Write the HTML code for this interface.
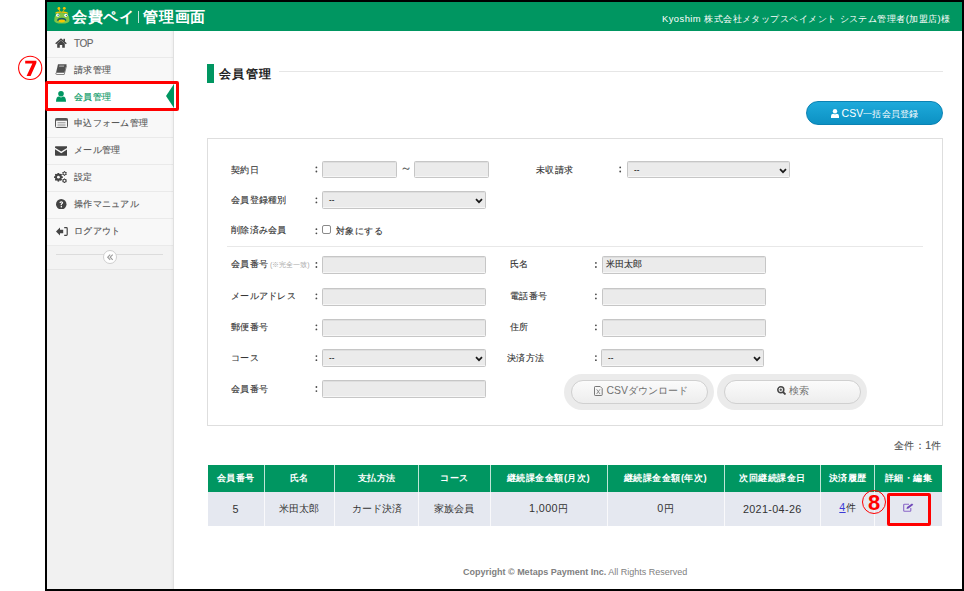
<!DOCTYPE html>
<html lang="ja">
<head>
<meta charset="utf-8">
<style>
*{box-sizing:border-box;margin:0;padding:0}
html,body{width:964px;height:591px;overflow:hidden;background:#fff;font-family:"Liberation Sans",sans-serif;color:#333}
.a{position:absolute}
#frame{left:45px;top:0;width:919px;height:591px;border:2px solid #000}
#hdr{left:47px;top:2px;width:915px;height:29px;background:#009661}
#logo{left:72px;top:4.7px;color:#fff;font-weight:bold;font-size:15.3px;letter-spacing:.7px;line-height:24px;white-space:nowrap}
#user{left:662px;top:12px;color:#fff;letter-spacing:.45px;font-size:9.4px;line-height:14px;white-space:nowrap}
#side{left:47px;top:31px;width:127px;height:558px;background:#f1f1f1;border-right:1px solid #e0e0e0}
.mi{left:47px;width:126px;background:#f8f8f8;border-bottom:1px solid #eaeaea}
.mt{left:74px;font-size:9.4px;letter-spacing:.3px;color:#555;-webkit-text-stroke-width:.12px;line-height:12px;white-space:nowrap}
.lbl{font-size:9.4px;letter-spacing:.25px;color:#333;-webkit-text-stroke-width:.12px;line-height:12px;white-space:nowrap}
.dt{width:1.8px;height:1.8px;border-radius:50%;background:#444}
.inp{background:#ebebeb;border:1px solid #c6c6c6;border-radius:1.5px;box-shadow:inset 0 1px 0 #dedede,inset 0 -1px 0 #f6f6f6}
.sel svg{position:absolute;right:2.5px;top:5.5px}
.sel span{position:absolute;left:6px;top:3px;font-size:8px;color:#333;font-weight:bold}
th,td{text-align:center;border-left:1px solid rgba(255,255,255,.75);padding:0;white-space:nowrap}
th:first-child,td:first-child{border-left:0}
th{font-size:9.4px;letter-spacing:.5px;color:#fff;font-weight:bold}
td{font-size:10px;color:#333}
.d{font-size:10.8px;letter-spacing:.35px}
</style>
</head>
<body>
<div class="a" id="frame"></div>
<div class="a" id="hdr"></div>
<!-- logo frog -->
<svg class="a" style="left:53px;top:6px" width="18" height="19" viewBox="53 6 18 19">
<circle cx="58.9" cy="8.5" r="1.4" fill="#f5c400"/><circle cx="64.3" cy="8.3" r="1.4" fill="#f5c400"/>
<path d="M59.1 9.5 Q59.6 11 60.2 11.8 M64.1 9.5 Q63.6 11 62.6 11.8" stroke="#f5c400" stroke-width="0.9" fill="none"/>
<path d="M55.2 13 Q56 11.6 60.5 11.6 Q62 11.8 63 11.4 Q66.5 11.2 68.4 12.9 L67.8 13.8 Q63 12.6 61.5 12.8 Q58 12.6 55.8 13.8Z" fill="#f5c400"/>
<path d="M56.2 13.6 Q61.8 12.4 67.4 13.6 Q69.6 17 69.5 20.5 Q69.4 23.6 61.8 23.6 Q54.2 23.6 54.2 20.5 Q54.1 17 56.2 13.6Z" fill="#80c545"/>
<circle cx="57.7" cy="15.2" r="1.6" fill="#fff"/><circle cx="65.9" cy="15.3" r="1.6" fill="#fff"/>
<circle cx="58.2" cy="15.3" r=".75" fill="#2d6aa0"/><circle cx="66.4" cy="15.4" r=".75" fill="#2d6aa0"/>
<path d="M57 20.8 Q57 17.7 61.7 17.7 Q66.4 17.7 66.4 20.8Z" fill="#0f5b64"/>
<ellipse cx="61.8" cy="21" rx="3.2" ry="1.4" fill="#f7c600"/>
</svg>
<div class="a" id="logo">会費ペイ<span style="display:inline-block;width:1px;height:12px;background:rgba(255,255,255,.75);margin:0 3.8px 0 3.5px;vertical-align:-1px"></span>管理画面</div>
<div class="a" id="user">Kyoshim 株式会社メタップスペイメント システム管理者(加盟店)様</div>

<!-- sidebar -->
<div class="a" id="side"></div>
<div class="a mi" style="top:31px;height:27px"></div>
<div class="a mi" style="top:58px;height:26px"></div>
<div class="a mi" style="top:84px;height:27px;background:#fff"></div>
<div class="a mi" style="top:111px;height:27px"></div>
<div class="a mi" style="top:138px;height:27px"></div>
<div class="a mi" style="top:165px;height:27px"></div>
<div class="a mi" style="top:192px;height:27px"></div>
<div class="a mi" style="top:219px;height:27px"></div>
<div class="a" style="left:47px;top:246px;width:126px;height:24px;background:#f3f3f3;border-bottom:1px solid #e6e6e6"></div>
<div class="a" style="left:56px;top:254px;width:107px;height:1px;background:#dcdcdc"></div>
<div class="a" style="left:103px;top:250px;width:14px;height:14px;border-radius:50%;background:#fff;border:1px solid #cfcfcf"></div>
<svg class="a" style="left:105.5px;top:253px" width="8" height="8" viewBox="0 0 8 8"><path d="M4.2 1.6L1.7 4.2L4.2 6.8M6.7 1.6L4.2 4.2L6.7 6.8" stroke="#9a9a9a" stroke-width="1.1" fill="none"/></svg>

<svg class="a" style="left:55px;top:38px" width="12" height="10" viewBox="0 0 12 10"><path d="M6 0.3 L11.8 5.2 L10.8 6.2 L6 2.2 L1.2 6.2 L0.2 5.2Z" fill="#444"/><path d="M2.2 5.6 L6 2.6 L9.8 5.6 V9.8 H7.2 V7 H4.8 V9.8 H2.2Z" fill="#444"/><rect x="8.4" y="0.8" width="1.6" height="2.8" fill="#444"/></svg>
<div class="a mt" style="top:37.5px;font-size:10px;letter-spacing:-.5px;color:#666">TOP</div>
<svg class="a" style="left:55px;top:64px" width="12" height="11" viewBox="0 0 12 11"><path d="M3 0.3 H11.6 L9.6 8.8 H1Z" fill="#505050"/><path d="M4.3 1.6H9.3L9 2.8H4Z" fill="#aaa"/><path d="M1 8.8 Q0.3 10.5 1.8 10.5 H9.2 L11.6 1.5" stroke="#777" stroke-width=".9" fill="none"/></svg>
<div class="a mt" style="top:64px">請求管理</div>
<svg class="a" style="left:56px;top:91px" width="10" height="11" viewBox="0 0 10 11"><circle cx="5" cy="2.8" r="2.8" fill="#009661"/><path d="M0 10.8 Q0 5.6 3 5.6 Q5 7.2 7 5.6 Q10 5.6 10 10.8Z" fill="#009661"/></svg>
<div class="a mt" style="top:91px;color:#009661">会員管理</div>
<svg class="a" style="left:54.5px;top:118px" width="13" height="10" viewBox="0 0 13 10"><rect x="0.5" y="0.5" width="12" height="9" rx="1" fill="#f4f4f4" stroke="#555"/><rect x="0.5" y="0.5" width="12" height="2.2" fill="#555"/><path d="M2.5 4.5H10.5M2.5 6.2H10.5M2.5 7.8H10.5" stroke="#999" stroke-width=".8"/></svg>
<div class="a mt" style="top:117px">申込フォーム管理</div>
<svg class="a" style="left:54.5px;top:146px" width="12.5" height="10" viewBox="0 0 13 10"><path d="M0 0.8Q0 0 .8 0H12.2Q13 0 13 .8V1.5L6.5 5.6L0 1.5Z" fill="#444"/><path d="M0 3.2L6.5 7.3L13 3.2V9.2Q13 10 12.2 10H.8Q0 10 0 9.2Z" fill="#444"/></svg>
<div class="a mt" style="top:144px">メール管理</div>
<svg class="a" style="left:53px;top:170px" width="14" height="14" viewBox="53 170 14 14"><g fill="#444"><rect x="57.6" y="173.0" width="1.5" height="8.4" transform="rotate(0 58.4 177.2)"/><rect x="57.6" y="173.0" width="1.5" height="8.4" transform="rotate(45 58.4 177.2)"/><rect x="57.6" y="173.0" width="1.5" height="8.4" transform="rotate(90 58.4 177.2)"/><rect x="57.6" y="173.0" width="1.5" height="8.4" transform="rotate(135 58.4 177.2)"/><rect x="57.6" y="173.0" width="1.5" height="8.4" transform="rotate(180 58.4 177.2)"/><rect x="57.6" y="173.0" width="1.5" height="8.4" transform="rotate(225 58.4 177.2)"/><rect x="57.6" y="173.0" width="1.5" height="8.4" transform="rotate(270 58.4 177.2)"/><rect x="57.6" y="173.0" width="1.5" height="8.4" transform="rotate(315 58.4 177.2)"/><rect x="64.05" y="171.40" width="0.9" height="4.2" transform="rotate(0 64.5 173.5)"/><rect x="64.05" y="171.40" width="0.9" height="4.2" transform="rotate(60 64.5 173.5)"/><rect x="64.05" y="171.40" width="0.9" height="4.2" transform="rotate(120 64.5 173.5)"/><rect x="64.05" y="171.40" width="0.9" height="4.2" transform="rotate(180 64.5 173.5)"/><rect x="64.05" y="171.40" width="0.9" height="4.2" transform="rotate(240 64.5 173.5)"/><rect x="64.05" y="171.40" width="0.9" height="4.2" transform="rotate(300 64.5 173.5)"/><rect x="64.05" y="178.70" width="0.9" height="4.2" transform="rotate(0 64.5 180.8)"/><rect x="64.05" y="178.70" width="0.9" height="4.2" transform="rotate(60 64.5 180.8)"/><rect x="64.05" y="178.70" width="0.9" height="4.2" transform="rotate(120 64.5 180.8)"/><rect x="64.05" y="178.70" width="0.9" height="4.2" transform="rotate(180 64.5 180.8)"/><rect x="64.05" y="178.70" width="0.9" height="4.2" transform="rotate(240 64.5 180.8)"/><rect x="64.05" y="178.70" width="0.9" height="4.2" transform="rotate(300 64.5 180.8)"/></g><circle cx="58.4" cy="177.2" r="2.5" fill="none" stroke="#444" stroke-width="1.7"/><circle cx="64.5" cy="173.5" r="1.45" fill="none" stroke="#444" stroke-width="1.1"/><circle cx="64.5" cy="180.8" r="1.45" fill="none" stroke="#444" stroke-width="1.1"/><circle cx="58.4" cy="177.2" r="1.4" fill="#f8f8f8"/><circle cx="64.5" cy="173.5" r=".95" fill="#f8f8f8"/><circle cx="64.5" cy="180.8" r=".95" fill="#f8f8f8"/></svg>
<div class="a mt" style="top:171px">設定</div>
<svg class="a" style="left:56px;top:198.5px" width="10.5" height="10.5" viewBox="0 0 11 11"><circle cx="5.5" cy="5.5" r="5.5" fill="#444"/><path d="M3.6 4.3 Q3.6 2.4 5.5 2.4 Q7.5 2.4 7.5 4 Q7.5 5 6.2 5.6 L6.2 6.6 L4.9 6.6 L4.9 5.2 Q6.1 4.6 6.1 4 Q6.1 3.5 5.5 3.5 Q4.9 3.5 4.9 4.3Z" fill="#fff"/><rect x="4.9" y="7.4" width="1.4" height="1.4" fill="#fff"/></svg>
<div class="a mt" style="top:198px">操作マニュアル</div>
<svg class="a" style="left:55.5px;top:227px" width="12" height="9" viewBox="0 0 12 9"><path d="M0 4.5 L4 0.6 L4 2.8 L7.2 2.8 L7.2 6.2 L4 6.2 L4 8.4Z" fill="#444"/><path d="M8.2 0.7 H10.4 Q11.2 0.7 11.2 1.5 V7.5 Q11.2 8.3 10.4 8.3 H8.2" stroke="#444" stroke-width="1.2" fill="none"/></svg>
<div class="a mt" style="top:225px">ログアウト</div>

<div class="a" style="left:170px;top:31px;width:3px;height:558px;background:linear-gradient(to right,rgba(0,0,0,0),rgba(0,0,0,.035))"></div>
<!-- red box 7 -->
<div class="a" style="left:45px;top:81px;width:134px;height:30px;border:3px solid #f00;border-radius:2px"></div>
<svg class="a" style="left:165px;top:84px" width="9" height="24"><path d="M9 0 L9 24 L1 12Z" fill="#009661"/></svg>
<svg class="a" style="left:17px;top:55px" width="26" height="26" viewBox="17 55 26 26"><circle cx="30.2" cy="67.9" r="11.6" fill="none" stroke="#f00" stroke-width="1.1"/><path d="M25.2 60.8 H36.4 V63.1 L30.6 76.1 H26.6 L32.4 63.4 H25.2Z" fill="#f00"/></svg>

<!-- title -->
<div class="a" style="left:207px;top:64px;width:7px;height:19px;background:#009661"></div>
<div class="a" style="left:219px;top:65.5px;font-size:12px;letter-spacing:1.4px;font-weight:bold;color:#222;line-height:16px">会員管理</div>
<div class="a" style="left:279px;top:71px;width:664px;height:1px;background:#e6e6e6"></div>

<!-- CSV button -->
<div class="a" style="left:806px;top:101px;width:137px;height:24px;border-radius:12px;background:linear-gradient(#1eaadb,#0c91c3);border:1px solid #0b82b3;color:#fff;font-size:9.4px;letter-spacing:.2px;line-height:22px;text-align:center;white-space:nowrap"><svg width="8" height="9" viewBox="0 0 8 9" style="vertical-align:-1px;margin-right:3px"><circle cx="4" cy="2.2" r="2.2" fill="#fff"/><path d="M0 9 V7 Q0 4.8 2.5 4.8 Q4 5.8 5.5 4.8 Q8 4.8 8 7 V9Z" fill="#fff"/></svg><span style="font-size:10.5px;letter-spacing:0">CSV</span>一括会員登録</div>

<!-- panel -->
<div class="a" style="left:207px;top:138px;width:736px;height:288px;border:1px solid #dedede"></div>
<div class="a" style="left:227px;top:246px;width:696px;height:1px;background:#e8e8e8"></div>


<!-- form -->
<div class="a lbl" style="left:231px;top:164px">契約日</div><svg class="a" style="left:314px;top:165px" width="5" height="9" viewBox="314 165 5 9"><circle cx="316.40" cy="167.40" r="0.9" fill="#4a4a4a"/><circle cx="316.40" cy="171.50" r="0.9" fill="#4a4a4a"/></svg>
<div class="a inp" style="left:322px;top:161px;width:75px;height:17px"></div>
<div class="a lbl" style="left:400px;top:162px;font-size:12px;color:#555;letter-spacing:0">～</div>
<div class="a inp" style="left:414px;top:161px;width:75px;height:17px"></div>
<div class="a lbl" style="left:536px;top:164px">未収請求</div><svg class="a" style="left:618px;top:165px" width="5" height="9" viewBox="618 165 5 9"><circle cx="620.20" cy="167.40" r="0.9" fill="#4a4a4a"/><circle cx="620.20" cy="171.50" r="0.9" fill="#4a4a4a"/></svg>
<div class="a inp sel" style="left:627px;top:161px;width:163px;height:17px"><span>--</span><svg width="8" height="6" viewBox="0 0 8 6"><path d="M1 1.2 L4 4.2 L7 1.2" stroke="#1a1a1a" stroke-width="1.7" fill="none"/></svg></div>

<div class="a lbl" style="left:231px;top:194px">会員登録種別</div><svg class="a" style="left:314px;top:196px" width="5" height="9" viewBox="314 196 5 9"><circle cx="316.40" cy="198.30" r="0.9" fill="#4a4a4a"/><circle cx="316.40" cy="202.40" r="0.9" fill="#4a4a4a"/></svg>
<div class="a inp sel" style="left:322px;top:191px;width:164px;height:17.5px"><span>--</span><svg width="8" height="6" viewBox="0 0 8 6"><path d="M1 1.2 L4 4.2 L7 1.2" stroke="#1a1a1a" stroke-width="1.7" fill="none"/></svg></div>

<div class="a lbl" style="left:231px;top:224px">削除済み会員</div><svg class="a" style="left:314px;top:227px" width="5" height="9" viewBox="314 227 5 9"><circle cx="316.40" cy="229.20" r="0.9" fill="#4a4a4a"/><circle cx="316.40" cy="233.30" r="0.9" fill="#4a4a4a"/></svg>
<div class="a" style="left:322px;top:225px;width:9px;height:9px;border:1px solid #8a8a8a;border-radius:2px;background:#fff"></div>
<div class="a lbl" style="left:336px;top:224.5px;letter-spacing:.45px">対象にする</div>

<div class="a lbl" style="left:231px;top:258px">会員番号<span style="font-size:7px;letter-spacing:0;color:#aaa;margin-left:2px;-webkit-text-stroke:0">(※完全一致)</span></div>
<svg class="a" style="left:314px;top:260px" width="5" height="9" viewBox="314 260 5 9"><circle cx="316.40" cy="262.90" r="0.9" fill="#4a4a4a"/><circle cx="316.40" cy="267.00" r="0.9" fill="#4a4a4a"/></svg>
<div class="a inp" style="left:322px;top:256px;width:164px;height:17.5px"></div>
<div class="a lbl" style="left:510px;top:258px">氏名</div><svg class="a" style="left:593px;top:260px" width="5" height="9" viewBox="593 260 5 9"><circle cx="595.90" cy="262.90" r="0.9" fill="#4a4a4a"/><circle cx="595.90" cy="267.00" r="0.9" fill="#4a4a4a"/></svg>
<div class="a inp" style="left:602px;top:256px;width:164px;height:17.5px"><span class="a lbl" style="left:3px;top:1.3px;font-size:9px;letter-spacing:0">米田太郎</span></div>

<div class="a lbl" style="left:231px;top:290px">メールアドレス</div><svg class="a" style="left:314px;top:292px" width="5" height="9" viewBox="314 292 5 9"><circle cx="316.40" cy="294.30" r="0.9" fill="#4a4a4a"/><circle cx="316.40" cy="298.40" r="0.9" fill="#4a4a4a"/></svg>
<div class="a inp" style="left:322px;top:288px;width:164px;height:17.5px"></div>
<div class="a lbl" style="left:510px;top:290px">電話番号</div><svg class="a" style="left:593px;top:292px" width="5" height="9" viewBox="593 292 5 9"><circle cx="595.90" cy="294.30" r="0.9" fill="#4a4a4a"/><circle cx="595.90" cy="298.40" r="0.9" fill="#4a4a4a"/></svg>
<div class="a inp" style="left:602px;top:288px;width:164px;height:17.5px"></div>

<div class="a lbl" style="left:231px;top:321px">郵便番号</div><svg class="a" style="left:314px;top:323px" width="5" height="9" viewBox="314 323 5 9"><circle cx="316.40" cy="325.30" r="0.9" fill="#4a4a4a"/><circle cx="316.40" cy="329.40" r="0.9" fill="#4a4a4a"/></svg>
<div class="a inp" style="left:322px;top:319px;width:164px;height:17.5px"></div>
<div class="a lbl" style="left:510px;top:321px">住所</div><svg class="a" style="left:593px;top:323px" width="5" height="9" viewBox="593 323 5 9"><circle cx="595.90" cy="325.30" r="0.9" fill="#4a4a4a"/><circle cx="595.90" cy="329.40" r="0.9" fill="#4a4a4a"/></svg>
<div class="a inp" style="left:602px;top:319px;width:164px;height:17.5px"></div>

<div class="a lbl" style="left:231px;top:352px">コース</div><svg class="a" style="left:314px;top:354px" width="5" height="9" viewBox="314 354 5 9"><circle cx="316.40" cy="356.10" r="0.9" fill="#4a4a4a"/><circle cx="316.40" cy="360.20" r="0.9" fill="#4a4a4a"/></svg>
<div class="a inp sel" style="left:322px;top:349px;width:164px;height:17.5px"><span>--</span><svg width="8" height="6" viewBox="0 0 8 6"><path d="M1 1.2 L4 4.2 L7 1.2" stroke="#1a1a1a" stroke-width="1.7" fill="none"/></svg></div>
<div class="a lbl" style="left:507px;top:352px">決済方法</div><svg class="a" style="left:593px;top:354px" width="5" height="9" viewBox="593 354 5 9"><circle cx="595.90" cy="356.10" r="0.9" fill="#4a4a4a"/><circle cx="595.90" cy="360.20" r="0.9" fill="#4a4a4a"/></svg>
<div class="a inp sel" style="left:601px;top:349px;width:163px;height:17.5px"><span>--</span><svg width="8" height="6" viewBox="0 0 8 6"><path d="M1 1.2 L4 4.2 L7 1.2" stroke="#1a1a1a" stroke-width="1.7" fill="none"/></svg></div>

<div class="a lbl" style="left:231px;top:383px">会員番号</div><svg class="a" style="left:314px;top:385px" width="5" height="9" viewBox="314 385 5 9"><circle cx="316.40" cy="387.00" r="0.9" fill="#4a4a4a"/><circle cx="316.40" cy="391.10" r="0.9" fill="#4a4a4a"/></svg>
<div class="a inp" style="left:322px;top:380px;width:164px;height:17.5px"></div>

<!-- buttons -->
<div class="a" style="left:564px;top:374px;width:150px;height:36px;border-radius:18px;background:#ebebeb"></div>
<div class="a" style="left:571px;top:380px;width:137px;height:24px;padding-left:3px;border-radius:12px;background:linear-gradient(#fbfbfb,#ededed);border:1px solid #d0d0d0;color:#707070;font-size:9.6px;line-height:19px;text-align:center;white-space:nowrap"><svg width="9" height="10" viewBox="0 0 9 10" style="vertical-align:-1.5px;margin-right:3.5px"><path d="M1.2 0.5H6.2L8.2 2.5V8.8Q8.2 9.5 7.5 9.5H1.2Q0.5 9.5 0.5 8.8V1.2Q0.5 0.5 1.2 0.5Z" fill="none" stroke="#777" stroke-width="1"/><path d="M2.6 3.3L6 8M6 3.3L2.6 8" stroke="#888" stroke-width=".9"/></svg><span style="font-size:10.4px">CSV</span>ダウンロード</div>
<div class="a" style="left:717px;top:374px;width:150px;height:36px;border-radius:18px;background:#ebebeb"></div>
<div class="a" style="left:724px;top:380px;width:137px;height:24px;border-radius:12px;background:linear-gradient(#fbfbfb,#ededed);border:1px solid #d0d0d0;color:#707070;font-size:9.6px;line-height:19px;text-align:center;white-space:nowrap"><svg width="9" height="9" viewBox="0 0 9 9" style="vertical-align:-1px;margin-right:3px"><circle cx="3.8" cy="3.8" r="3" fill="none" stroke="#444" stroke-width="1.5"/><path d="M6 6L8.5 8.5" stroke="#444" stroke-width="1.8"/><path d="M2.5 3.8H5.1M3.8 2.5V5.1" stroke="#444" stroke-width=".9"/></svg>検索</div>

<!-- total -->
<div class="a lbl" style="left:894px;top:439px;color:#555;font-size:10px;letter-spacing:.4px">全件：<span class="d" style="font-size:10.5px;letter-spacing:0">1</span>件</div>

<!-- table -->
<table class="a" style="left:208px;top:465px;width:734px;border-collapse:collapse;table-layout:fixed">
<colgroup><col style="width:56px"><col style="width:70.5px"><col style="width:84px"><col style="width:71.5px"><col style="width:117px"><col style="width:117px"><col style="width:96.5px"><col style="width:54px"><col style="width:67.5px"></colgroup>
<tr style="height:27px;background:#009661">
<th>会員番号</th><th>氏名</th><th>支払方法</th><th>コース</th><th>継続課金金額(月次)</th><th>継続課金金額(年次)</th><th>次回継続課金日</th><th>決済履歴</th><th>詳細・編集</th></tr>
<tr style="height:34px;background:#e5e8f0">
<td class="d">5</td><td>米田太郎</td><td>カード決済</td><td>家族会員</td><td><span class="d">1,000</span>円</td><td><span class="d">0</span>円</td><td class="d">2021-04-26</td><td><span style="position:relative;top:-1px"><span class="d" style="color:#3b3bd6;text-decoration:underline">4</span>件</span></td><td><svg width="11" height="9" viewBox="0 0 11 9" style="vertical-align:0.5px"><path d="M6 1.2H1.5Q0.7 1.2 0.7 2V7.5Q0.7 8.3 1.5 8.3H7Q7.8 8.3 7.8 7.5V5" fill="none" stroke="#8a66c8" stroke-width="1.1"/><path d="M3.5 6L4 4L9 0.5L10.3 1.8L5.5 5.5Z" fill="#7048b8"/></svg></td></tr>
</table>

<!-- red box 8 -->
<div class="a" style="left:887px;top:493px;width:44px;height:33px;border:3px solid #f00;border-radius:2px"></div>
<svg class="a" style="left:861px;top:489px" width="26" height="26"><circle cx="13" cy="13" r="11.5" fill="none" stroke="#f00" stroke-width="1"/><text x="13" y="20.8" text-anchor="middle" font-family="Liberation Sans" font-weight="bold" font-size="22" fill="#f00">8</text></svg>

<!-- footer -->
<div class="a" style="left:463px;top:566px;width:224px;font-size:9px;color:#808080;line-height:12px;white-space:nowrap"><b>Copyright © Metaps Payment Inc.</b> All Rights Reserved</div>
</body>
</html>
